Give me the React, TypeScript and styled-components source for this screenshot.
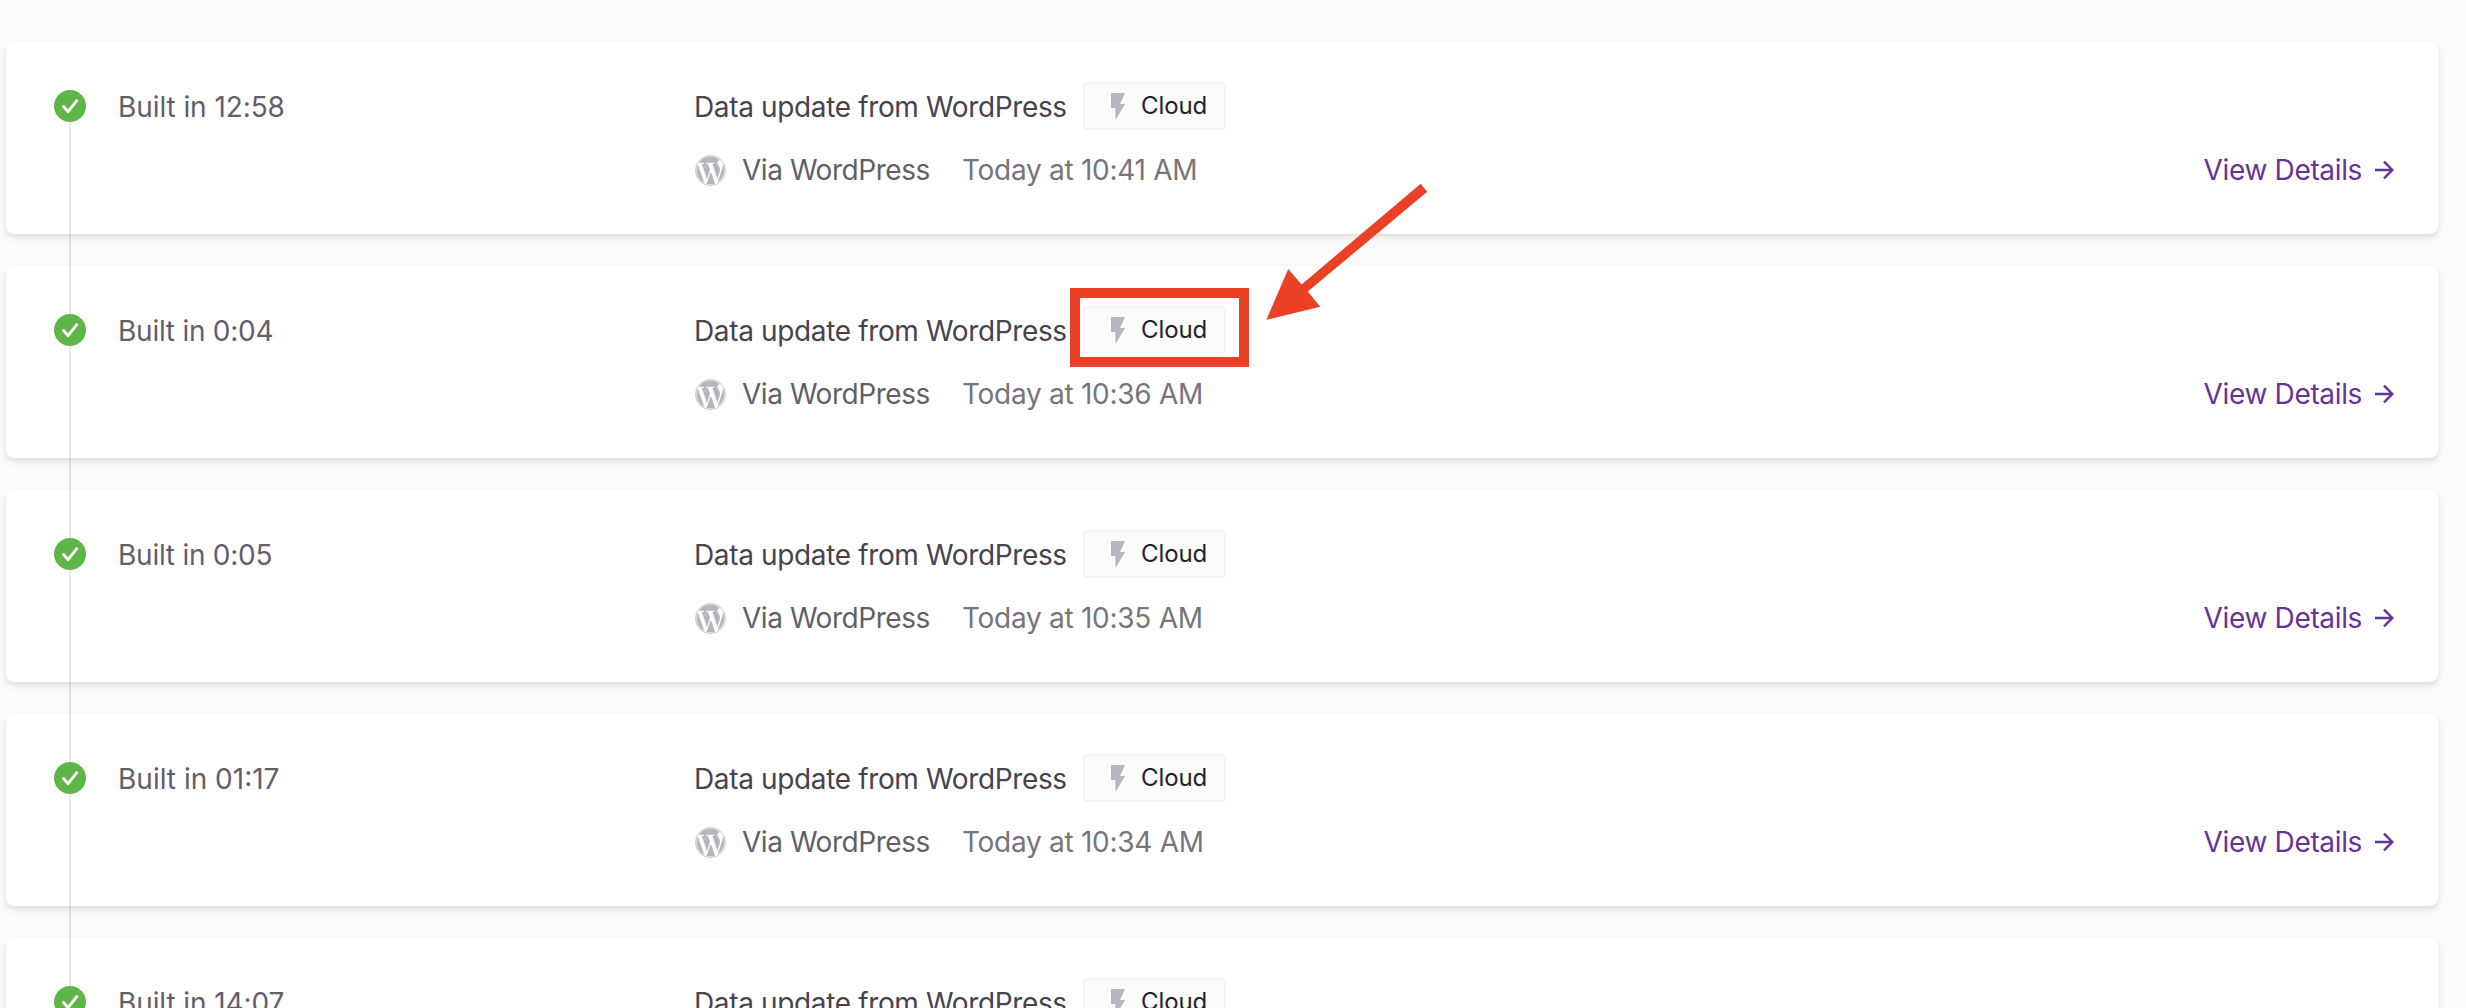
import React from "react";
import styled, { createGlobalStyle } from "styled-components";

const GlobalStyle = createGlobalStyle`
  *, *::before, *::after { box-sizing: border-box; }
  html, body { margin: 0; height: 1008px; overflow: hidden; background: #fbfbfb; }
  body { font-family: Inter, "Noto Sans", sans-serif; font-size: 28px; }
`;

const Page = styled.main`
  position: relative;
  width: 2466px;
  height: 1008px;
  overflow: hidden;
  padding: 42px 28px 0 6px;
  background: #fbfbfb;
`;

const BuildList = styled.ul`
  display: flex;
  flex-direction: column;
  gap: 32px;
  margin: 0;
  padding: 0;
  list-style: none;
`;

const BuildCard = styled.li`
  display: grid;
  grid-template-columns: 32px 544px 1fr auto;
  column-gap: 32px;
  height: 192px;
  padding: 40px 44px 0 48px;
  flex: none;
  border-radius: 8px;
  background: #fff;
  box-shadow: 0 2px 4px rgba(46, 41, 51, 0.08), 0 4px 8px rgba(71, 63, 79, 0.08);
`;

const Status = styled.div`
  position: relative;
  height: 32px;
  margin-top: 8px;

  svg { display: block; }
`;

const Connector = styled.span`
  position: absolute;
  top: 32px;
  left: 15px;
  width: 2px;
  height: 192px;
  background: rgba(0, 0, 0, 0.1);
`;

const Text = styled.span<{ $color: string; $tracking?: string }>`
  color: ${(p) => p.$color};
  font-size: 28px;
  line-height: 48px;
  letter-spacing: ${(p) => p.$tracking ?? "0"};
  white-space: nowrap;
`;

const Duration = styled.div`
  padding-top: 1px;
`;

const Summary = styled.div`
  display: flex;
  flex-direction: column;
  gap: 16px;
`;

const TitleLine = styled.div`
  display: flex;
  height: 48px;

  > span:first-child { width: 389px; padding-top: 1px; }
`;

const SourceLine = styled.div`
  display: flex;
  align-items: center;
  height: 48px;

  svg { margin: 0 16.5px 0 0.5px; flex: none; }
  > span:nth-of-type(1) { width: 220px; }
`;

const Tag = styled.span`
  display: flex;
  align-items: center;
  width: 143px;
  height: 48px;
  padding-left: 26px;
  border: 2px solid #f5f5f5;
  border-radius: 4px;
  background: #fbfbfb;
  color: #232129;
  font-size: 24px;
  line-height: 42px;
  letter-spacing: -0.1px;

  svg { margin-right: 16px; }
`;

const DetailsLink = styled.a`
  display: flex;
  align-items: center;
  align-self: start;
  height: 48px;
  margin-top: 64px;
  cursor: pointer;

  svg { margin-left: 12px; }
`;

const Highlight = styled.div`
  position: absolute;
  top: 288px;
  left: 1070px;
  width: 179px;
  height: 79px;
  border: 10px solid #ea4025;
`;

const Pointer = styled.svg`
  position: absolute;
  top: 180px;
  left: 1260px;
`;

const CheckIcon = () => (
  <svg width="32" height="32" viewBox="0 0 32 32">
    <circle cx="16" cy="16" r="16" fill="#5eb548" />
    <path d="M9.5 16.6 14 21.6 22.8 10.6" fill="none" stroke="#fff" strokeWidth="3" strokeLinecap="round" strokeLinejoin="round" />
  </svg>
);

const BoltIcon = () => (
  <svg width="14" height="27" viewBox="0 0 14 27">
    <path d="M0 0H14L9 11H14L4.4 27V15H0Z" fill="#b7b5bd" />
  </svg>
);

const WordPressIcon = () => (
  <svg width="31" height="31" viewBox="0 0 24 24" fill="#b7b5bd">
    <circle cx="12" cy="12" r="11.65" fill="none" stroke="#b7b5bd" strokeWidth="0.6" />
    <path d="M21.469 6.825c.84 1.537 1.318 3.3 1.318 5.175 0 3.979-2.156 7.456-5.363 9.325l3.295-9.527c.615-1.54.82-2.771.82-3.864 0-.405-.026-.78-.07-1.11m-7.981.105c.647-.03 1.232-.105 1.232-.105.582-.075.514-.93-.067-.899 0 0-1.755.135-2.88.135-1.064 0-2.85-.15-2.85-.15-.585-.03-.661.855-.075.885 0 0 .54.061 1.125.09l1.68 4.605-2.37 7.08L5.354 6.9c.649-.03 1.234-.1 1.234-.1.585-.075.516-.93-.065-.896 0 0-1.746.138-2.874.138-.2 0-.438-.008-.69-.015C4.911 3.15 8.235 1.215 12 1.215c2.809 0 5.365 1.072 7.286 2.833-.046-.003-.091-.009-.141-.009-1.06 0-1.812.923-1.812 1.914 0 .89.513 1.643 1.06 2.531.411.72.89 1.643.89 2.977 0 .915-.354 1.994-.821 3.479l-1.075 3.585-3.9-11.61.001.014zM12 22.784c-1.059 0-2.081-.153-3.048-.437l3.237-9.406 3.315 9.087c.024.053.05.101.078.149-1.12.393-2.325.609-3.582.609M1.211 12c0-1.564.336-3.05.935-4.39L7.29 21.709C3.694 19.96 1.212 16.271 1.211 12" />
  </svg>
);

const ArrowIcon = () => (
  <svg width="20" height="20" viewBox="0 0 20 20">
    <path d="M1 10H18.4M10 1.6 18.4 10 10 18.4" fill="none" stroke="#663399" strokeWidth="2.4" />
  </svg>
);

const builds = [
  { duration: "12:58", time: "10:41", tracking: "-0.08px" },
  { duration: "0:04", time: "10:36", tracking: "-0.25px" },
  { duration: "0:05", time: "10:35", tracking: "-0.25px" },
  { duration: "01:17", time: "10:34", tracking: "0" },
  { duration: "14:07", time: "10:20", tracking: "-0.1px" },
];

export default function App() {
  return (
    <>
      <GlobalStyle />
      <Page>
        <BuildList>
          {builds.map((build) => (
            <BuildCard key={build.duration}>
              <Status>
                <CheckIcon />
                <Connector />
              </Status>
              <Duration>
                <Text $color="#635e69" $tracking={build.tracking}>Built in {build.duration}</Text>
              </Duration>
              <Summary>
                <TitleLine>
                  <Text $color="#48434f" $tracking="-0.36px">Data update from WordPress</Text>
                  <Tag>
                    <BoltIcon />
                    <span>Cloud</span>
                  </Tag>
                </TitleLine>
                <SourceLine>
                  <WordPressIcon />
                  <Text $color="#635e69" $tracking="-0.45px">Via WordPress</Text>
                  <Text $color="#78757a" $tracking="-0.28px">Today at {build.time} AM</Text>
                </SourceLine>
              </Summary>
              <DetailsLink>
                <Text $color="#663399" $tracking="-0.35px">View Details</Text>
                <ArrowIcon />
              </DetailsLink>
            </BuildCard>
          ))}
        </BuildList>
        <Highlight />
        <Pointer width="180" height="150" viewBox="1260 180 180 150" fill="#ea4025">
          <path d="M1266.3 319.8 1288.3 269 1301.6 284.4 1420.7 183.8 1427.2 191.7 1307.8 291.6 1320.2 306.8Z" />
        </Pointer>
      </Page>
    </>
  );
}
